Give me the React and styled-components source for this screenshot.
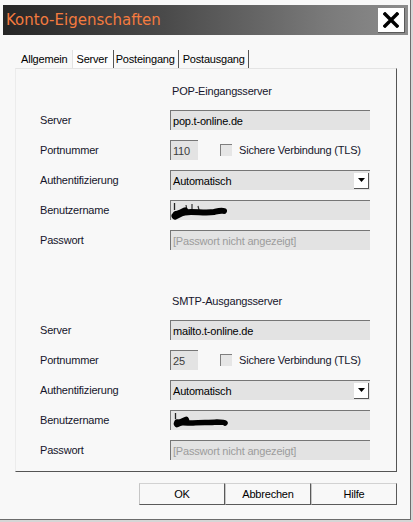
import React from "react";
import styled, { createGlobalStyle } from "styled-components";

const GlobalStyle = createGlobalStyle`
  html, body {
    margin: 0;
    padding: 0;
    background: #d6d6d6;
  }
  body {
    font-family: "Liberation Sans", Arial, sans-serif;
    font-size: 11px;
    letter-spacing: -0.2px;
    color: #15152b;
  }
`;

const Window = styled.div`
  width: 411px;
  height: 520px;
  box-sizing: border-box;
  padding-top: 5px;
  background: #f8f8f8;
  border-right: 1px solid #6c6c6c;
  border-bottom: 1px solid #6c6c6c;
  display: flex;
  flex-direction: column;
`;

const TitleBar = styled.div`
  height: 30px;
  margin: 0 2px 0 3px;
  padding: 0 3px;
  display: flex;
  align-items: center;
  justify-content: space-between;
  background: linear-gradient(to right, #262626 0%, #4a4a4a 40%, #7a7a7a 80%, #8c8c8c 100%);
`;

const Title = styled.span`
  font-family: "DejaVu Sans", sans-serif;
  font-size: 15px;
  letter-spacing: 0;
  color: #f47b3f;
  padding-bottom: 1px;
`;

const CloseButton = styled.div`
  width: 27px;
  height: 25px;
  box-sizing: border-box;
  background: #ffffff;
  border-right: 1px solid #5a5a5a;
  border-bottom: 1px solid #5a5a5a;
  display: grid;
  place-items: center;
`;

const Body = styled.div`
  padding: 15px 13px 0 15px;
  display: flex;
  flex-direction: column;
`;

const TabList = styled.div`
  height: 18px;
  display: flex;
`;

const Tab = styled.div`
  line-height: 18px;
  padding: 0 ${(p) => (p.$active ? "5px" : "3px")} 0 ${(p) => p.$pl || 1}px;
  background: ${(p) => (p.$active ? "#fdfdfd" : "transparent")};
  border-left: 1px solid ${(p) => (p.$active ? "#e2e2e2" : "transparent")};
  border-right: 1px solid ${(p) => (p.$last || p.$active || p.$sep ? "#555" : "transparent")};
  color: #000;
`;

const Panel = styled.div`
  border-top: 1px solid #e4e4e4;
  border-left: 1px solid #ececec;
  border-right: 1px solid #555;
  border-bottom: 1px solid #555;
  padding: 13px 0 11px 24px;
  display: flex;
  flex-direction: column;
  gap: 42px;
`;

const Section = styled.div`
  display: flex;
  flex-direction: column;
  gap: 10px;
`;

const Heading = styled.div`
  height: 18px;
  line-height: 18px;
  margin-left: 132px;
`;

const Row = styled.div`
  height: 20px;
  display: grid;
  grid-template-columns: 130px 1fr;
  align-items: center;
`;

const Label = styled.span`
  color: #15152b;
`;

const Controls = styled.div`
  display: flex;
  align-items: center;
`;

const Field = styled.div`
  width: ${(p) => p.$w || 200}px;
  height: 20px;
  box-sizing: border-box;
  padding-left: 2px;
  background: #e3e3e3;
  border-top: 1px solid #767676;
  border-left: 1px solid #767676;
  display: flex;
  align-items: center;
  overflow: hidden;
  color: ${(p) => p.$color || "#000"};
`;

const DropButton = styled.div`
  margin-left: auto;
  margin-right: 1px;
  width: 15px;
  height: 16px;
  box-sizing: border-box;
  background: #ffffff;
  border-right: 1px solid #555;
  border-bottom: 1px solid #555;
  display: grid;
  place-items: center;
`;

const CheckBox = styled.div`
  width: 12px;
  height: 12px;
  box-sizing: border-box;
  margin-left: 22px;
  background: #e6e6e6;
  border-top: 1px solid #7e7e7e;
  border-left: 1px solid #7e7e7e;
`;

const CheckLabel = styled.span`
  margin-left: 7px;
  color: #15152b;
`;

const ButtonRow = styled.div`
  margin-top: 11px;
  display: flex;
  justify-content: flex-end;
`;

const Button = styled.div`
  width: 86px;
  height: 22px;
  box-sizing: border-box;
  background: #f8f8f8;
  border-top: 1px solid #d2d2d2;
  border-left: 1px solid #c6c6c6;
  border-right: 1px solid #5a5a5a;
  border-bottom: 1px solid #5a5a5a;
  display: grid;
  place-items: center;
  color: #000;
`;

const CloseIcon = () => (
  <svg width="16" height="16" viewBox="0 0 16 16">
    <path d="M2 2 L14 14 M14 2 L2 14" stroke="#000" strokeWidth="3.4" strokeLinecap="square" />
  </svg>
);

const ArrowIcon = () => (
  <svg width="7" height="4" viewBox="0 0 7 4">
    <polygon points="0,0 7,0 3.5,4" fill="#000" />
  </svg>
);

// marker-pen redaction over the user name
const Scribble = ({ variant }) => (
  <svg width="58" height="18" viewBox="0 0 58 18" style={{ marginLeft: -2 }}>
    {variant === "pop" ? (
      <>
        <path d="M3.5 1 L3.5 8" stroke="#222" strokeWidth="1.3" />
        <path d="M15 3 L16 8 M21 2 L21 8 M27 4 L28 8" stroke="#333" strokeWidth="1.2" />
        <path
          d="M5 12 C10 11 15 10 20 10 C28 10 36 11 43 10 C47 9 50 8 53 9"
          stroke="#000"
          strokeWidth="6"
          strokeLinecap="round"
          fill="none"
        />
        <path d="M4 14 L14 9" stroke="#000" strokeWidth="7" strokeLinecap="round" />
      </>
    ) : (
      <>
        <path d="M4.5 1 L4.5 7" stroke="#222" strokeWidth="1.3" />
        <path
          d="M6 10 C11 11 16 11 22 11 C30 10 38 11 46 10 C50 10 53 10 54 11"
          stroke="#000"
          strokeWidth="5.5"
          strokeLinecap="round"
          fill="none"
        />
        <path d="M6 12 L15 8" stroke="#000" strokeWidth="6.5" strokeLinecap="round" />
      </>
    )}
  </svg>
);

const ServerSection = ({ title, host, port, variant }) => (
  <Section>
    <Heading>{title}</Heading>
    <Row>
      <Label>Server</Label>
      <Field>{host}</Field>
    </Row>
    <Row>
      <Label>Portnummer</Label>
      <Controls>
        <Field $w={28} $color="#3c3c3c">{port}</Field>
        <CheckBox />
        <CheckLabel>Sichere Verbindung (TLS)</CheckLabel>
      </Controls>
    </Row>
    <Row>
      <Label>Authentifizierung</Label>
      <Field>
        Automatisch
        <DropButton>
          <ArrowIcon />
        </DropButton>
      </Field>
    </Row>
    <Row>
      <Label>Benutzername</Label>
      <Field>
        <Scribble variant={variant} />
      </Field>
    </Row>
    <Row>
      <Label>Passwort</Label>
      <Field $color="#9c9c9c">[Passwort nicht angezeigt]</Field>
    </Row>
  </Section>
);

export default function App() {
  return (
    <>
      <GlobalStyle />
      <Window>
        <TitleBar>
          <Title>Konto-Eigenschaften</Title>
          <CloseButton>
            <CloseIcon />
          </CloseButton>
        </TitleBar>
        <Body>
          <TabList>
            <Tab $pl={5}>Allgemein</Tab>
            <Tab $active $pl={4}>Server</Tab>
            <Tab $sep>Posteingang</Tab>
            <Tab $last $pl={3}>Postausgang</Tab>
          </TabList>
          <Panel>
            <ServerSection title="POP-Eingangsserver" host="pop.t-online.de" port="110" variant="pop" />
            <ServerSection title="SMTP-Ausgangsserver" host="mailto.t-online.de" port="25" variant="smtp" />
          </Panel>
          <ButtonRow>
            <Button>OK</Button>
            <Button>Abbrechen</Button>
            <Button>Hilfe</Button>
          </ButtonRow>
        </Body>
      </Window>
    </>
  );
}
